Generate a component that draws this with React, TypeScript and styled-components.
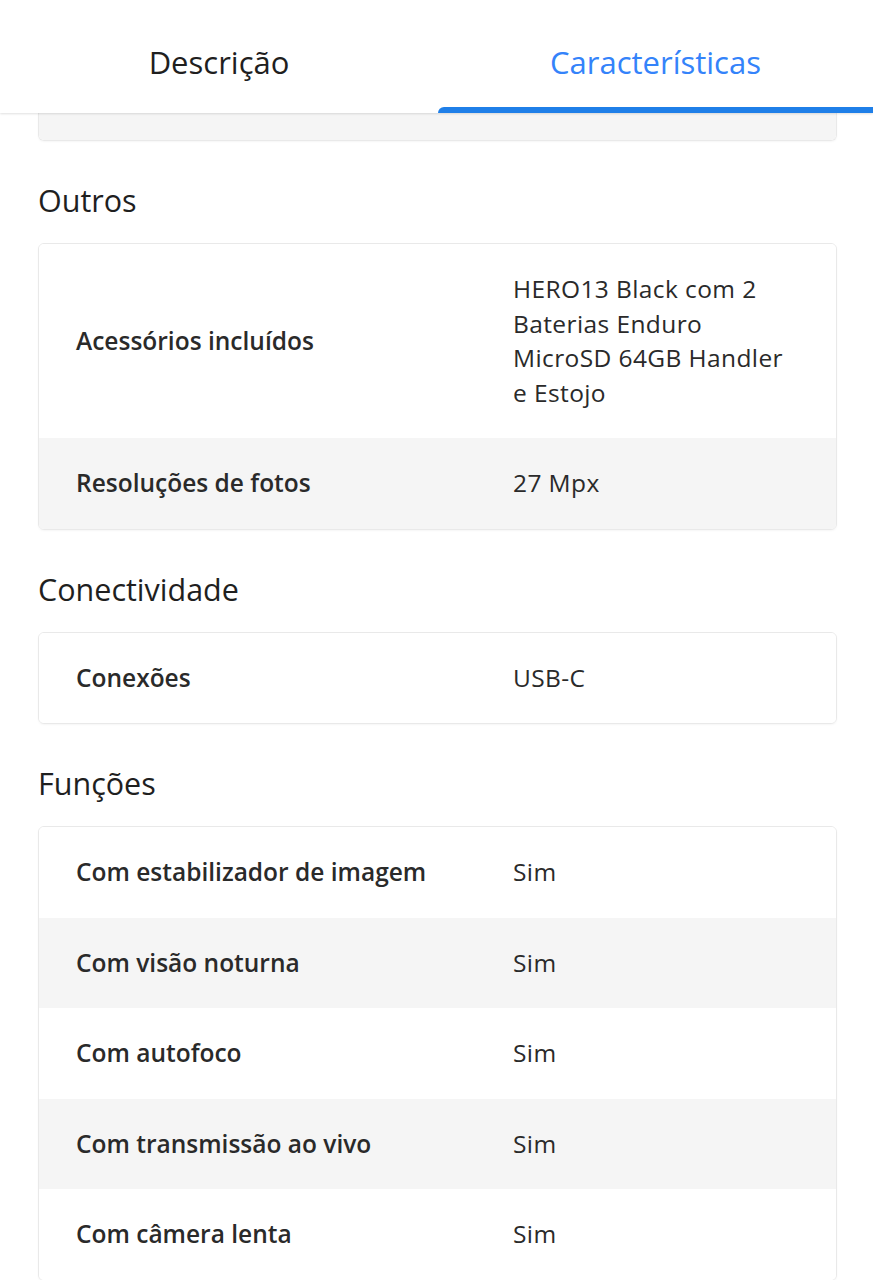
import React from "react";
import styled, { createGlobalStyle } from "styled-components";

const Global = createGlobalStyle`
  html, body { margin: 0; padding: 0; background: #fff; }
  body { font-family: "Open Sans", "Noto Sans", sans-serif; color: #333; -webkit-font-smoothing: antialiased; }
  * { box-sizing: border-box; }
`;

const Page = styled.div`
  width: 873px;
  height: 1280px;
  overflow: hidden;
  display: flex;
  flex-direction: column;
  background: #fff;
`;

const TabBar = styled.div`
  position: relative;
  z-index: 2;
  display: grid;
  grid-template-columns: 438px 1fr;
  height: 113px;
  background: #fff;
  box-shadow: 0 1px 2px rgba(0, 0, 0, 0.12);
  flex-shrink: 0;
`;

const Tab = styled.div<{ $active?: boolean }>`
  position: relative;
  display: flex;
  align-items: center;
  justify-content: center;
  padding-top: 10px;
  font-size: 31px;
  color: ${(p) => (p.$active ? "#3483fa" : "#1f1f1f")};
  ${(p) =>
    p.$active &&
    `&::after {
    content: "";
    position: absolute;
    left: 0; right: 0; bottom: 0;
    height: 6px;
    background: #1f7fe8;
    border-top-left-radius: 6px;
  }`}
`;

const Content = styled.div`
  flex: 1;
  padding: 0 36px 0 38px;
  display: flex;
  flex-direction: column;
`;

const Heading = styled.h2`
  margin: 42px 0 26px;
  font-size: 30.5px;
  line-height: 34px;
  font-weight: 400;
  color: #1f1f1f;
`;

const Card = styled.div<{ $clipped?: boolean }>`
  border: 1px solid #e9e9e9;
  border-radius: ${(p) => (p.$clipped ? "0 0 6px 6px" : "6px")};
  border-top-width: ${(p) => (p.$clipped ? "0" : "1px")};
  box-shadow: 0 1px 2px rgba(0, 0, 0, 0.04);
  overflow: hidden;
  flex-shrink: 0;
`;

const Row = styled.div<{ $shade?: boolean }>`
  display: grid;
  grid-template-columns: 437px 1fr;
  align-items: center;
  padding: 28px 36px 28px 37px;
  background: ${(p) => (p.$shade ? "#f5f5f5" : "#fff")};
`;

const StubRow = styled.div`
  height: 27px;
  background: #f5f5f5;
`;

const Label = styled.div`
  font-size: 24.5px;
  line-height: 34.5px;
  font-weight: 600;
  color: #2a2a2a;
`;

const Value = styled.div`
  font-size: 24.5px;
  line-height: 34.5px;
  font-weight: 400;
  letter-spacing: 0.4px;
  color: #2a2a2a;
`;

type Item = [string, string];

const sections: { title: string; items: Item[] }[] = [
  {
    title: "Outros",
    items: [
      ["Acessórios incluídos", "HERO13 Black com 2 Baterias Enduro MicroSD 64GB Handler e Estojo"],
      ["Resoluções de fotos", "27 Mpx"],
    ],
  },
  { title: "Conectividade", items: [["Conexões", "USB-C"]] },
  {
    title: "Funções",
    items: [
      ["Com estabilizador de imagem", "Sim"],
      ["Com visão noturna", "Sim"],
      ["Com autofoco", "Sim"],
      ["Com transmissão ao vivo", "Sim"],
      ["Com câmera lenta", "Sim"],
    ],
  },
];

export default function App() {
  return (
    <>
      <Global />
      <Page>
        <TabBar>
          <Tab>Descrição</Tab>
          <Tab $active>Características</Tab>
        </TabBar>
        <Content>
          <Card $clipped>
            <StubRow />
          </Card>
          {sections.map((s) => (
            <React.Fragment key={s.title}>
              <Heading>{s.title}</Heading>
              <Card>
                {s.items.map(([k, v], i) => (
                  <Row key={k} $shade={i % 2 === 1}>
                    <Label>{k}</Label>
                    <Value>{v}</Value>
                  </Row>
                ))}
              </Card>
            </React.Fragment>
          ))}
        </Content>
      </Page>
    </>
  );
}
